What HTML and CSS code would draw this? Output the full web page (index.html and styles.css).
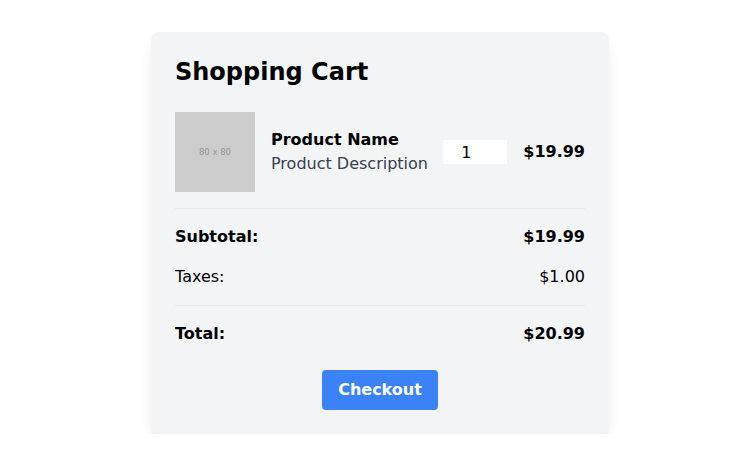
FILE: index.html
```html
<!DOCTYPE html>
<html>
<head>
<meta charset="utf-8">
<link rel="stylesheet" href="styles.css">
</head>
<body>
<div class="page">
  <div class="card">
    <h1 class="title">Shopping Cart</h1>
    <div class="item">
      <div class="thumb"><span>80 x 80</span></div>
      <div class="info">
        <div class="name">Product Name</div>
        <div class="desc">Product Description</div>
      </div>
      <input class="qty" type="text" value="1">
      <div class="price">$19.99</div>
    </div>
    <div class="summary">
      <div class="row bold"><span>Subtotal:</span><span>$19.99</span></div>
      <div class="row"><span>Taxes:</span><span>$1.00</span></div>
    </div>
    <div class="row bold total"><span>Total:</span><span>$20.99</span></div>
    <div class="actions"><button class="checkout">Checkout</button></div>
  </div>
</div>
</body>
</html>
```

FILE: styles.css
```css
* { box-sizing: border-box; }
html, body { margin: 0; padding: 0; background: #fff; }
body { font-family: "DejaVu Sans", sans-serif; color: #000; }
.page { display: flex; justify-content: center; padding: 32px 0 0 17px; }
.card {
  width: 458px;
  background: #f3f4f6;
  border-radius: 8px;
  padding: 24px;
  box-shadow: 0 10px 15px -3px rgba(0,0,0,0.1), 0 4px 6px -4px rgba(0,0,0,0.1);
}
.title { margin: 0 0 24px; font-size: 24px; line-height: 32px; font-weight: bold; }
.item { display: flex; align-items: center; padding-bottom: 16px; border-bottom: 1px solid #e5e7eb; }
.thumb { width: 80px; height: 80px; background: #cccccc; display: flex; align-items: center; justify-content: center; flex-shrink: 0; }
.thumb span { font-size: 8.5px; color: #969696; }
.info { flex: 1; margin-left: 16px; }
.name { font-weight: bold; font-size: 16px; line-height: 24px; }
.desc { color: #374151; font-size: 16px; line-height: 24px; }
.qty { width: 64px; height: 24px; border: none; background: #fff; padding: 0 0 0 18px; font-family: "DejaVu Sans", sans-serif; font-size: 16px; color: #000; outline: none; }
.price { margin-left: 16px; font-weight: bold; font-size: 16px; line-height: 24px; }
.summary { padding: 16px 0; border-bottom: 1px solid #e5e7eb; }
.row { display: flex; justify-content: space-between; font-size: 16px; line-height: 24px; }
.summary .row + .row { margin-top: 16px; }
.bold { font-weight: bold; }
.total { margin-top: 16px; }
.actions { display: flex; justify-content: center; margin-top: 24px; }
.checkout {
  background: #3b82f6; color: #fff; border: none; border-radius: 4px;
  font-family: "DejaVu Sans", sans-serif; font-weight: bold; font-size: 16px; line-height: 24px;
  padding: 8px 16px;
}
```
